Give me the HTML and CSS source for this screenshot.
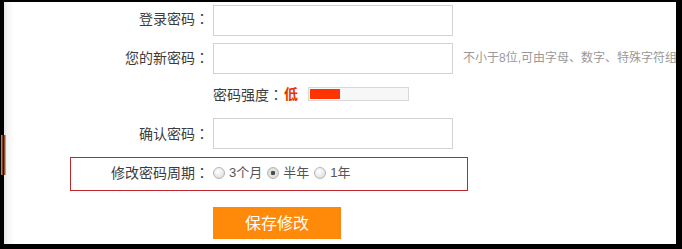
FILE: index.html
```html
<!DOCTYPE html>
<html lang="zh-CN">
<head>
<meta charset="utf-8">
<title>修改密码</title>
<link rel="stylesheet" href="styles.css">
</head>
<body>
<div class="side-tab"></div>
<div class="frame">
  <form class="form">
    <div class="row row-first">
      <label class="label">登录密码<span class="colon" lang="ja">：</span></label>
      <input class="field" type="password">
    </div>
    <div class="row row-second">
      <label class="label">您的新密码<span class="colon" lang="ja">：</span></label>
      <input class="field" type="password">
      <span class="hint">不小于8位,可由字母、数字、特殊字符组成</span>
    </div>
    <div class="row row-strength">
      <span class="label"></span>
      <span class="strength-label">密码强度<span class="colon" lang="ja">：</span></span>
      <span class="strength-level">低</span>
      <span class="strength-bar"><span class="strength-fill" style="width:30px"></span></span>
    </div>
    <div class="row row-confirm">
      <label class="label">确认密码<span class="colon" lang="ja">：</span></label>
      <input class="field" type="password">
    </div>
    <div class="row row-period">
      <label class="label">修改密码周期<span class="colon" lang="ja">：</span></label>
      <label class="opt opt-first"><input class="radio" type="radio" name="period"><span class="opt-text">3个月</span></label>
      <label class="opt"><input class="radio" type="radio" name="period" checked><span class="opt-text">半年</span></label>
      <label class="opt"><input class="radio" type="radio" name="period"><span class="opt-text">1年</span></label>
    </div>
    <div class="row row-submit">
      <span class="label"></span>
      <button class="save" type="button">保存修改</button>
    </div>
  </form>
</div>
</body>
</html>
```
FILE: styles.css
```css
html, body {
  margin: 0;
  padding: 0;
  background: #000;
}
body {
  position: relative;
  font-family: "Liberation Sans", "Noto Sans CJK SC", sans-serif;
  color: #333;
  overflow: hidden;
  padding: 2px 6px 5px 4px;
}
.frame {
  width: 672px;
  height: 242px;
  background: linear-gradient(to right, #e6e6e6 0, #f6f6f6 4px, #fff 10px);
  overflow: hidden;
}
.side-tab {
  position: absolute;
  left: 1px;
  top: 135px;
  width: 5px;
  height: 40px;
  background: linear-gradient(to right, #d9743a 0, #d9743a 1px, #2a1204 2px, #2a1204 3px, #e8905c 4px);
  z-index: 2;
}
.form {
  margin: 0;
  padding: 0;
}
.row {
  display: flex;
  align-items: center;
  margin-left: 66px;
  width: 396px;
  border: 1px solid transparent;
  font-size: 14px;
}
.label {
  flex: 0 0 138px;
  width: 138px;
  text-align: right;
  color: #3c3c3c;
  font-size: 14px;
  line-height: 18px;
  margin-bottom: 4px;
  white-space: nowrap;
}
.colon {
  font-family: "Noto Sans CJK JP", sans-serif;
}
.field {
  box-sizing: border-box;
  width: 240px;
  height: 31px;
  margin: 0 0 0 4px;
  padding: 0 6px;
  border: 1px solid #d2d2d2;
  background: #fff;
  outline: none;
}
.row-first {
  margin-top: 2px;
  height: 31px;
}
.row-second {
  margin-top: 5px;
  height: 31px;
  width: 620px;
}
.row-second .label {
  margin-bottom: 2px;
}
.hint {
  margin-left: 10px;
  margin-bottom: 2px;
  font-size: 12px;
  line-height: 16px;
  color: #999;
  white-space: nowrap;
}
.row-strength {
  height: 36px;
  padding-bottom: 4px;
}
.row-strength .label {
  margin-bottom: 0;
}
.strength-label {
  margin-left: 4px;
  font-size: 14px;
  line-height: 18px;
  color: #3c3c3c;
}
.strength-level {
  font-size: 14px;
  line-height: 18px;
  font-weight: bold;
  color: #e83300;
  margin-left: 1px;
}
.strength-bar {
  display: block;
  box-sizing: border-box;
  width: 101px;
  height: 14px;
  margin-left: 10px;
  border: 1px solid #d8d8d8;
  background: #f7f7f7;
  padding: 1px 0 1px 1px;
}
.strength-fill {
  display: block;
  height: 10px;
  background: #ff3300;
}
.row-confirm {
  height: 31px;
}
.row-confirm .label {
  margin-bottom: 0;
}
.row-period {
  margin-top: 7px;
  height: 32px;
  border-color: #c0272d;
}
.opt {
  display: flex;
  align-items: center;
  font-size: 13px;
  color: #555;
}
.opt-text {
  line-height: 16px;
  margin-bottom: 2px;
}
.opt-first {
  margin-left: 4px;
}
.radio {
  appearance: none;
  -webkit-appearance: none;
  box-sizing: border-box;
  width: 12px;
  height: 12px;
  margin: 0 4px 2px 0;
  border-radius: 50%;
  border: 1px solid #b5b5b5;
  background: radial-gradient(circle at 40% 35%, #fff 0, #f0f0f0 40%, #d4d4d4 100%);
}
.radio:checked {
  background: radial-gradient(circle, #444 0, #555 2px, #e8e8e8 2.6px, #d0d0d0 100%);
}
.opt + .opt .radio {
  margin-left: 5px;
}
.row-submit {
  margin-top: 15px;
  height: 32px;
}
.row-submit .label {
  margin-bottom: 0;
}
.save {
  margin-left: 4px;
  width: 128px;
  height: 32px;
  border: 0;
  padding: 0 0 2px;
  background: #ff8a0a;
  color: #fff;
  font-family: "Liberation Sans", "Noto Sans CJK SC", sans-serif;
  font-size: 16px;
  cursor: pointer;
}
```
